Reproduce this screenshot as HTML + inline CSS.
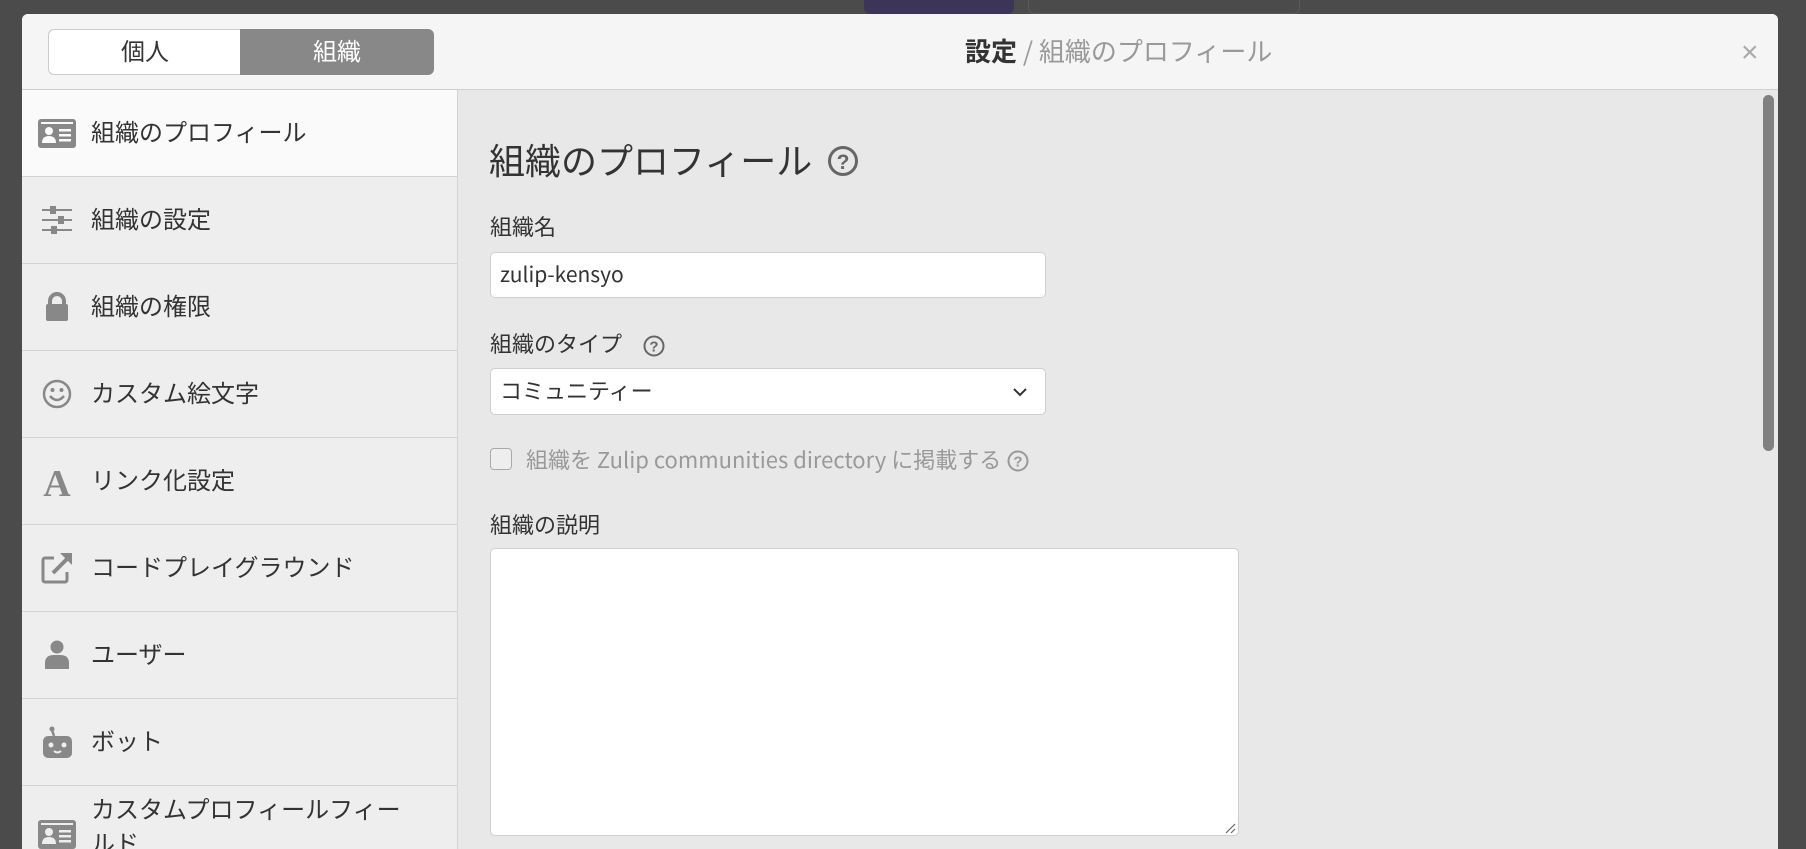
<!DOCTYPE html>
<html><head><meta charset="utf-8"><style>
*{box-sizing:border-box;margin:0;padding:0}
body{width:1806px;height:849px;overflow:hidden;background:#4b4b4b;font-family:"Noto Sans CJK JP","Liberation Sans",sans-serif;position:relative;color:#333}
.abs{position:absolute}
#modal{left:22px;top:14px;width:1756px;height:835px;background:#e8e8e8;border-radius:6px 6px 0 0;overflow:hidden}
#hdr{left:0;top:0;width:1756px;height:76px;background:#f5f5f5;border-bottom:1px solid #cfcfcf}
.tab{top:15px;height:46px;font-size:24px;text-align:center;line-height:40px}
#side{left:0;top:76px;width:436px;height:760px;background:#eeeeee;border-right:1px solid #d4d4d4}
.row{position:absolute;left:0;width:435px;height:87px;border-bottom:1px solid #d4d4d4;font-size:24px;line-height:82px}
.row .t{position:absolute;left:69px;top:0;color:#333}
.row svg{position:absolute;left:15px;top:25px}
.lbl{font-size:22px;color:#333;line-height:30px}
.inp{background:#fff;border:1px solid #cfcfcf;border-radius:5px}
</style></head><body>
<div class="abs" style="left:864px;top:0;width:150px;height:14px;background:#3d3557;border-radius:0 0 6px 6px"></div>
<div class="abs" style="left:1028px;top:0;width:272px;height:14px;border:1px solid #5a5a5a;border-top:none;border-radius:0 0 6px 6px"></div>

<div id="modal" class="abs">
 <div id="hdr" class="abs">
  <div class="abs tab" style="left:26px;width:193px;background:#fff;border:1px solid #ccc;border-right:none;border-radius:6px 0 0 6px;color:#333">個人</div>
  <div class="abs tab" style="left:218px;width:194px;background:#888;border:1px solid #888;border-radius:0 6px 6px 0;color:#fff">組織</div>
  <div class="abs" style="left:943px;top:19px;font-size:26px;line-height:36px;color:#999"><b style="color:#333">設定</b> / 組織のプロフィール</div>
  <div class="abs" style="left:1719px;top:21px;font-size:30px;line-height:36px;color:#aaa;font-family:'Liberation Sans',sans-serif">×</div>
 </div>
 <div id="side" class="abs">
  <div class="row" style="top:0;background:#fafafa"><svg width="40" height="36" viewBox="0 0 40 36"><rect x="1" y="4" width="38" height="29" rx="3" fill="#888"/><rect x="4" y="7" width="32" height="2" fill="#fafafa"/><circle cx="12" cy="16" r="4" fill="#fafafa"/><path d="M5 28 q0-7 7-7 q7 0 7 7z" fill="#fafafa"/><rect x="22" y="14" width="12" height="2.5" fill="#fafafa"/><rect x="22" y="19" width="12" height="2.5" fill="#fafafa"/><rect x="22" y="24" width="12" height="2.5" fill="#fafafa"/></svg><span class="t">組織のプロフィール</span></div>
  <div class="row" style="top:87px"><svg width="40" height="36" viewBox="0 0 40 36"><g fill="#888"><rect x="5" y="7" width="30" height="2"/><rect x="5" y="17" width="30" height="2"/><rect x="5" y="27" width="30" height="2"/><rect x="13" y="4" width="6" height="8"/><rect x="21" y="14" width="6" height="8"/><rect x="14" y="24" width="6" height="8"/></g></svg><span class="t">組織の設定</span></div>
  <div class="row" style="top:174px"><svg width="40" height="36" viewBox="0 0 40 36"><path d="M13 16 v-4 a7 7 0 0 1 14 0 v4" stroke="#888" stroke-width="4" fill="none"/><rect x="9" y="15" width="22" height="17" rx="2" fill="#888"/></svg><span class="t">組織の権限</span></div>
  <div class="row" style="top:261px"><svg width="40" height="36" viewBox="0 0 40 36"><circle cx="20" cy="18" r="13" stroke="#888" stroke-width="2.5" fill="none"/><circle cx="15.5" cy="14" r="2" fill="#888"/><circle cx="24.5" cy="14" r="2" fill="#888"/><path d="M13 20 q7 8 14 0" stroke="#888" stroke-width="2.5" fill="none"/></svg><span class="t">カスタム絵文字</span></div>
  <div class="row" style="top:348px"><svg width="40" height="36" viewBox="0 0 40 36"><text x="20" y="33" text-anchor="middle" font-family="Liberation Serif,serif" font-weight="bold" font-size="38" fill="#888">A</text></svg><span class="t">リンク化設定</span></div>
  <div class="row" style="top:435px"><svg width="40" height="36" viewBox="0 0 40 36"><path d="M17 8 h-9 a2 2 0 0 0-2 2 v20 a2 2 0 0 0 2 2 h20 a2 2 0 0 0 2-2 v-8" stroke="#888" stroke-width="3" fill="none"/><path d="M16 23 l16-16" stroke="#888" stroke-width="4"/><path d="M23 3 h12 v12z" fill="#888"/></svg><span class="t">コードプレイグラウンド</span></div>
  <div class="row" style="top:522px"><svg width="40" height="36" viewBox="0 0 40 36"><circle cx="20" cy="10" r="6.5" fill="#888"/><path d="M8 32 v-6 q0-8 9-8 h6 q9 0 9 8 v6z" fill="#888"/></svg><span class="t">ユーザー</span></div>
  <div class="row" style="top:609px"><svg width="40" height="36" viewBox="0 0 40 36"><rect x="6" y="12" width="29" height="22" rx="5" fill="#888"/><path d="M17 12 l-2-6" stroke="#888" stroke-width="2.5"/><circle cx="15" cy="5" r="2.5" fill="#888"/><circle cx="14" cy="21" r="2.5" fill="#eee"/><circle cx="27" cy="21" r="2.5" fill="#eee"/><path d="M17 27 q3.5 3 7 0" stroke="#eee" stroke-width="2" fill="none"/></svg><span class="t">ボット</span></div>
  <div class="row" style="top:696px"><svg width="40" height="36" viewBox="0 0 40 36" style="top:30px"><rect x="1" y="4" width="38" height="29" rx="3" fill="#888"/><rect x="4" y="7" width="32" height="2" fill="#eee"/><circle cx="12" cy="16" r="4" fill="#eee"/><path d="M5 28 q0-7 7-7 q7 0 7 7z" fill="#eee"/><rect x="22" y="14" width="12" height="2.5" fill="#eee"/><rect x="22" y="19" width="12" height="2.5" fill="#eee"/><rect x="22" y="24" width="12" height="2.5" fill="#eee"/></svg><span class="t" style="line-height:34px;top:5px">カスタムプロフィールフィー<br>ルド</span></div>
 </div>

 <div class="abs" style="left:467px;top:120px;font-size:36px;line-height:50px;color:#333">組織のプロフィール</div>
 <svg class="abs" style="left:805px;top:131px" width="32" height="32" viewBox="0 0 32 32"><circle cx="16" cy="16" r="13.5" stroke="#666" stroke-width="3" fill="none"/><text x="16" y="24" text-anchor="middle" font-family="Liberation Sans,sans-serif" font-weight="bold" font-size="21" fill="#666">?</text></svg>

 <div class="abs lbl" style="left:468px;top:197px">組織名</div>
 <div class="abs inp" style="left:468px;top:238px;width:556px;height:46px;font-size:21px;line-height:42px;padding-left:9px">zulip-kensyo</div>

 <div class="abs lbl" style="left:468px;top:314px">組織のタイプ</div>
 <svg class="abs" style="left:620px;top:320px" width="24" height="24" viewBox="0 0 24 24"><circle cx="12" cy="12" r="9.5" stroke="#666" stroke-width="2" fill="none"/><text x="12" y="17.5" text-anchor="middle" font-family="Liberation Sans,sans-serif" font-weight="bold" font-size="15" fill="#666">?</text></svg>
 <div class="abs inp" style="left:468px;top:354px;width:556px;height:47px;font-size:22px;line-height:43px;padding-left:9px">コミュニティー</div>
 <svg class="abs" style="left:990px;top:370px" width="16" height="16" viewBox="0 0 16 16"><path d="M2 5 l6 6 l6-6" stroke="#333" stroke-width="2" fill="none"/></svg>

 <div class="abs" style="left:468px;top:434px;width:22px;height:22px;border:1px solid #aaa;border-radius:4px;background:#eee"></div>
 <div class="abs" style="left:504px;top:429px;font-size:22px;line-height:32px;color:#999;white-space:nowrap">組織を Zulip communities directory に掲載する <svg width="24" height="24" viewBox="0 0 24 24" style="vertical-align:-5px"><circle cx="12" cy="12" r="9.5" stroke="#999" stroke-width="2" fill="none"/><text x="12" y="17.5" text-anchor="middle" font-family="Liberation Sans,sans-serif" font-weight="bold" font-size="15" fill="#999">?</text></svg></div>

 <div class="abs lbl" style="left:468px;top:495px">組織の説明</div>
 <div class="abs inp" style="left:468px;top:534px;width:749px;height:288px"></div>
 <svg class="abs" style="left:1202px;top:808px" width="12" height="12" viewBox="0 0 12 12"><path d="M11 2 L2 11 M11 7 L7 11" stroke="#666" stroke-width="1.2"/></svg>

 <div class="abs" style="left:1741px;top:81px;width:11px;height:356px;background:#808080;border-radius:6px"></div>
</div>
</body></html>
